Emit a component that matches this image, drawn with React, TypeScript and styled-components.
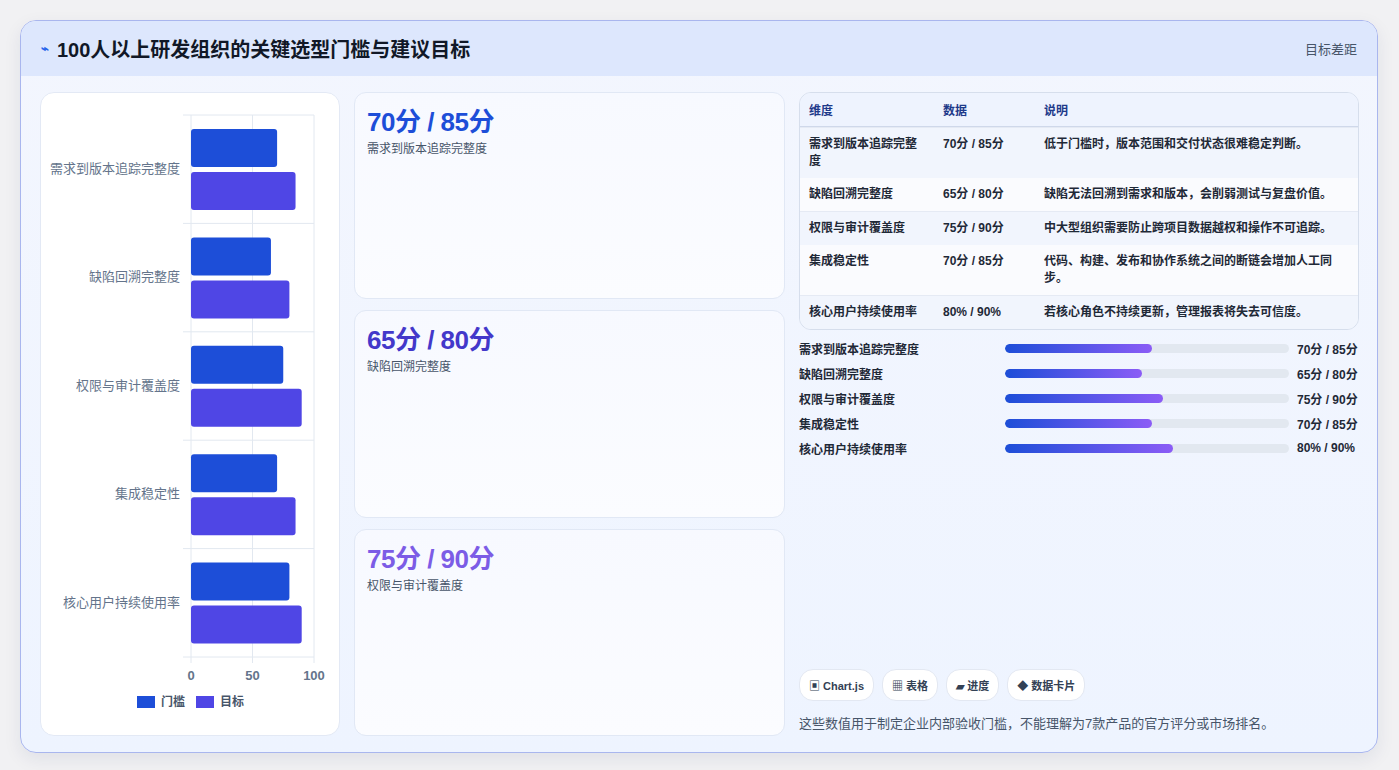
import styled, { createGlobalStyle } from 'styled-components';

const Global = createGlobalStyle`
  body { margin: 0; background: #f1f1f3; font-family: "Liberation Sans", "Noto Sans CJK SC", sans-serif; }
`;

const Page = styled('div')`
  padding: 20px 21px 19px 20px;
  height: 770px;
  box-sizing: border-box;
`;

const Panel = styled('div')`
  height: 100%;
  border: 1px solid #a9b6ee;
  border-radius: 16px;
  overflow: hidden;
  background: linear-gradient(180deg, #f3f6fe 0%, #eef4ff 100%);
  display: flex;
  flex-direction: column;
  box-shadow: 0 6px 18px rgba(30, 40, 90, 0.08);
`;

const Header = styled('div')`
  height: 55px;
  background: #dde7fd;
  display: flex;
  align-items: center;
  justify-content: space-between;
  padding: 0 20px;
`;

const Title = styled('h1')`
  margin: 0;
  font-size: 20px;
  font-weight: 700;
  color: #111827;
  display: flex;
  align-items: center;
  gap: 8px;
`;

const Bolt = styled('span')`
  color: #2563eb;
  font-size: 13px;
`;

const HeaderNote = styled('span')`
  font-size: 13px;
  color: #475569;
`;

const Body = styled('div')`
  flex: 1;
  display: grid;
  grid-template-columns: 300px 431px 1fr;
  gap: 14px;
  padding: 16px 18px 18px 19px;
  min-height: 0;
`;

const ChartCard = styled('div')`
  background: #fff;
  border: 1px solid #e3e9f5;
  border-radius: 14px;
`;

const CardCol = styled('div')`
  display: grid;
  grid-template-rows: repeat(3, 1fr);
  gap: 11px;
`;

const StatCard = styled('div')`
  background: linear-gradient(180deg, #f7f9ff, #fbfcff);
  border: 1px solid #e1e8f5;
  border-radius: 12px;
  padding: 8px 12px;
`;

const StatValue = styled('div')<{ $c: string }>`
  font-size: 26px;
  font-weight: 700;
  color: ${(p) => p.$c};
  letter-spacing: -0.5px;
`;

const StatLabel = styled('div')`
  font-size: 12px;
  color: #475569;
  margin-top: 1px;
`;

const RightCol = styled('div')`
  display: flex;
  flex-direction: column;
  min-width: 0;
`;

const Table = styled('table')`
  width: 100%;
  border-collapse: separate;
  border-spacing: 0;
  border: 1px solid #d6deec;
  border-radius: 12px;
  overflow: hidden;
  font-size: 12px;
  color: #1f2937;
  font-weight: 700;
`;

const Th = styled('th')`
  text-align: left;
  padding: 8px 9px;
  color: #1e3a8a;
  background: #eef3fe;
  border-bottom: 1px solid #cfd8ea;
`;

const Td = styled('td')<{ $alt: boolean }>`
  padding: 8px 9px;
  vertical-align: top;
  line-height: 17px;
  background: ${(p) => (p.$alt ? '#f1f5fd' : '#fafbfe')};
  border-top: ${(p) => (p.$alt ? '1px solid #e5eaf4' : 'none')};
`;

const Bars = styled('div')`
  display: flex;
  flex-direction: column;
  gap: 7px;
  padding: 9px 0 14px;
`;

const BarRow = styled('div')`
  display: grid;
  grid-template-columns: 198px 284px auto;
  gap: 8px;
  align-items: center;
  font-size: 12px;
  font-weight: 700;
  color: #1f2937;
  height: 18px;
  white-space: nowrap;
`;

const Track = styled('div')`
  height: 9px;
  border-radius: 5px;
  background: #e2e8f0;
  overflow: hidden;
`;

const Fill = styled('div')`
  height: 100%;
  border-radius: 5px;
  background: linear-gradient(90deg, #1d4ed8, #8b5cf6);
`;

const Spacer = styled('div')`
  flex: 1;
`;

const Chips = styled('div')`
  display: flex;
  gap: 8px;
  margin-bottom: 12px;
`;

const Chip = styled('span')`
  background: #fff;
  border: 1px solid #e3e8f2;
  border-radius: 14px;
  padding: 7px 9px;
  font-size: 11px;
  font-weight: 700;
  color: #334155;
`;

const Foot = styled('p')`
  margin: 0 0 4px;
  font-size: 13px;
  color: #475569;
`;

const rows = [
  { name: '需求到版本追踪完整度', data: '70分 / 85分', a: 70, b: 85, note: '低于门槛时，版本范围和交付状态很难稳定判断。' },
  { name: '缺陷回溯完整度', data: '65分 / 80分', a: 65, b: 80, note: '缺陷无法回溯到需求和版本，会削弱测试与复盘价值。' },
  { name: '权限与审计覆盖度', data: '75分 / 90分', a: 75, b: 90, note: '中大型组织需要防止跨项目数据越权和操作不可追踪。' },
  { name: '集成稳定性', data: '70分 / 85分', a: 70, b: 85, note: '代码、构建、发布和协作系统之间的断链会增加人工同步。' },
  { name: '核心用户持续使用率', data: '80% / 90%', a: 80, b: 90, note: '若核心角色不持续更新，管理报表将失去可信度。' },
];

const Chart = () => {
  const x0 = 150;
  const sc = 1.23;
  const top = 22;
  const band = 108.4;
  return (
    <svg width="300" height="638" viewBox="0 0 300 638">
      {[0, 50, 100].map((v) => (
        <line key={v} x1={x0 + v * sc} x2={x0 + v * sc} y1={top} y2={top + band * 5 + 6} stroke="#e2e8f0" />
      ))}
      {[0, 1, 2, 3, 4, 5].map((i) => (
        <line key={i} x1={x0 - 8} x2={x0 + 123} y1={top + i * band} y2={top + i * band} stroke="#e2e8f0" />
      ))}
      {rows.map((r, i) => {
        const y = top + i * band;
        return (
          <g key={r.name}>
            <text x={x0 - 11} y={y + 58} textAnchor="end" fontSize="13" fill="#64748b">{r.name}</text>
            <rect x={x0} y={y + 14} width={r.a * sc} height={38} rx="3" fill="#1d4ed8" />
            <rect x={x0} y={y + 57} width={r.b * sc} height={38} rx="3" fill="#4f46e5" />
          </g>
        );
      })}
      {[0, 50, 100].map((v) => (
        <text key={v} x={x0 + v * sc} y={587} textAnchor="middle" fontSize="13" fontWeight="700" fill="#64748b">{v}</text>
      ))}
      <rect x={96} y={603} width={18} height={12} fill="#1d4ed8" />
      <text x={120} y={613} fontSize="12" fontWeight="700" fill="#475569">门槛</text>
      <rect x={155} y={603} width={18} height={12} fill="#4f46e5" />
      <text x={179} y={613} fontSize="12" fontWeight="700" fill="#475569">目标</text>
    </svg>
  );
};

const cardColors = ['#1d4ed8', '#4338ca', '#7c5ce6'];

export default function App() {
  return (
    <>
      <Global />
      <Page>
        <Panel>
          <Header>
            <Title><Bolt>⌁</Bolt>100人以上研发组织的关键选型门槛与建议目标</Title>
            <HeaderNote>目标差距</HeaderNote>
          </Header>
          <Body>
            <ChartCard><Chart /></ChartCard>
            <CardCol>
              {rows.slice(0, 3).map((r, i) => (
                <StatCard key={r.name}>
                  <StatValue $c={cardColors[i]}>{r.data}</StatValue>
                  <StatLabel>{r.name}</StatLabel>
                </StatCard>
              ))}
            </CardCol>
            <RightCol>
              <Table>
                <thead>
                  <tr><Th style={{ width: 116 }}>维度</Th><Th style={{ width: 83 }}>数据</Th><Th>说明</Th></tr>
                </thead>
                <tbody>
                  {rows.map((r, i) => (
                    <tr key={r.name}>
                      <Td $alt={i % 2 === 0}>{r.name}</Td>
                      <Td $alt={i % 2 === 0}>{r.data}</Td>
                      <Td $alt={i % 2 === 0}>{r.note}</Td>
                    </tr>
                  ))}
                </tbody>
              </Table>
              <Bars>
                {rows.map((r) => (
                  <BarRow key={r.name}>
                    <span>{r.name}</span>
                    <Track><Fill style={{ width: `${(r.a / 100) * 74}%` }} /></Track>
                    <span>{r.data}</span>
                  </BarRow>
                ))}
              </Bars>
              <Spacer />
              <Chips>
                <Chip>▣ Chart.js</Chip>
                <Chip>▦ 表格</Chip>
                <Chip>▰ 进度</Chip>
                <Chip>◆ 数据卡片</Chip>
              </Chips>
              <Foot>这些数值用于制定企业内部验收门槛，不能理解为7款产品的官方评分或市场排名。</Foot>
            </RightCol>
          </Body>
        </Panel>
      </Page>
    </>
  );
}
